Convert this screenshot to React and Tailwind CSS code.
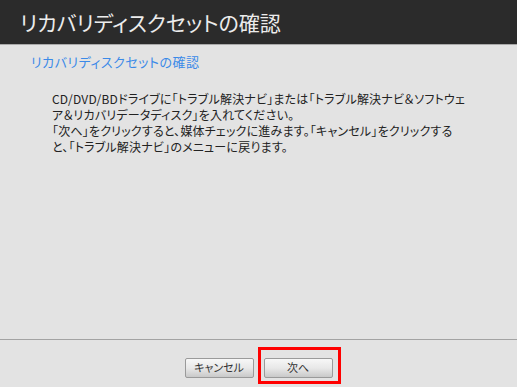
import React from 'react';

const font = "[font-family:'Noto_Sans_CJK_JP','Noto_Sans',sans-serif] [font-feature-settings:'palt']";

const Button = ({ children, highlighted }) => (
  <div className="relative">
    <button
      className={`w-[69px] h-[20px] rounded-[2px] border border-[#9a9a9a] bg-gradient-to-b from-[#f7f7f7] via-[#e8e8e8] to-[#c9c9c9] text-[11px] text-[#333] leading-none ${font}`}
    >
      {children}
    </button>
    {highlighted && (
      <span className="absolute -left-[6px] -right-[8px] -top-[6px] -bottom-[6px] border-[3px] border-[#ff0000] pointer-events-none" />
    )}
  </div>
);

export default function App() {
  return (
    <div className={`w-[517px] h-[387px] flex flex-col bg-[#e3e3e3] ${font}`}>
      <header className="h-[45px] bg-[#2b2b2b] border-b border-[#a9a9a9] flex items-center pl-[20px]">
        <h1 className="text-[21px] text-[#ececec] leading-none">リカバリディスクセットの確認</h1>
      </header>

      <main className="flex-1">
        <h2 className="mt-[8px] ml-[31px] text-[13px] tracking-[0.5px] text-[#3b8ae8] leading-[18px]">
          リカバリディスクセットの確認
        </h2>
        <div className="mt-[20px] ml-[52px] text-[12px] tracking-[0.2px] text-[#222] leading-[16px] whitespace-nowrap">
          <p>
            CD/DVD/BDドライブに「トラブル解決ナビ」または「トラブル解決ナビ＆ソフトウェ
            <br />
            ア＆リカバリデータディスク」を入れてください。
          </p>
          <p>
            「次へ」をクリックすると、媒体チェックに進みます。「キャンセル」をクリックする
            <br />
            と、「トラブル解決ナビ」のメニューに戻ります。
          </p>
        </div>
      </main>

      <footer className="h-[48px] border-t border-[#a3a3a3] flex items-start justify-center gap-[10px] pt-[13px]">
        <Button>キャンセル</Button>
        <Button highlighted>次へ</Button>
      </footer>
    </div>
  );
}
